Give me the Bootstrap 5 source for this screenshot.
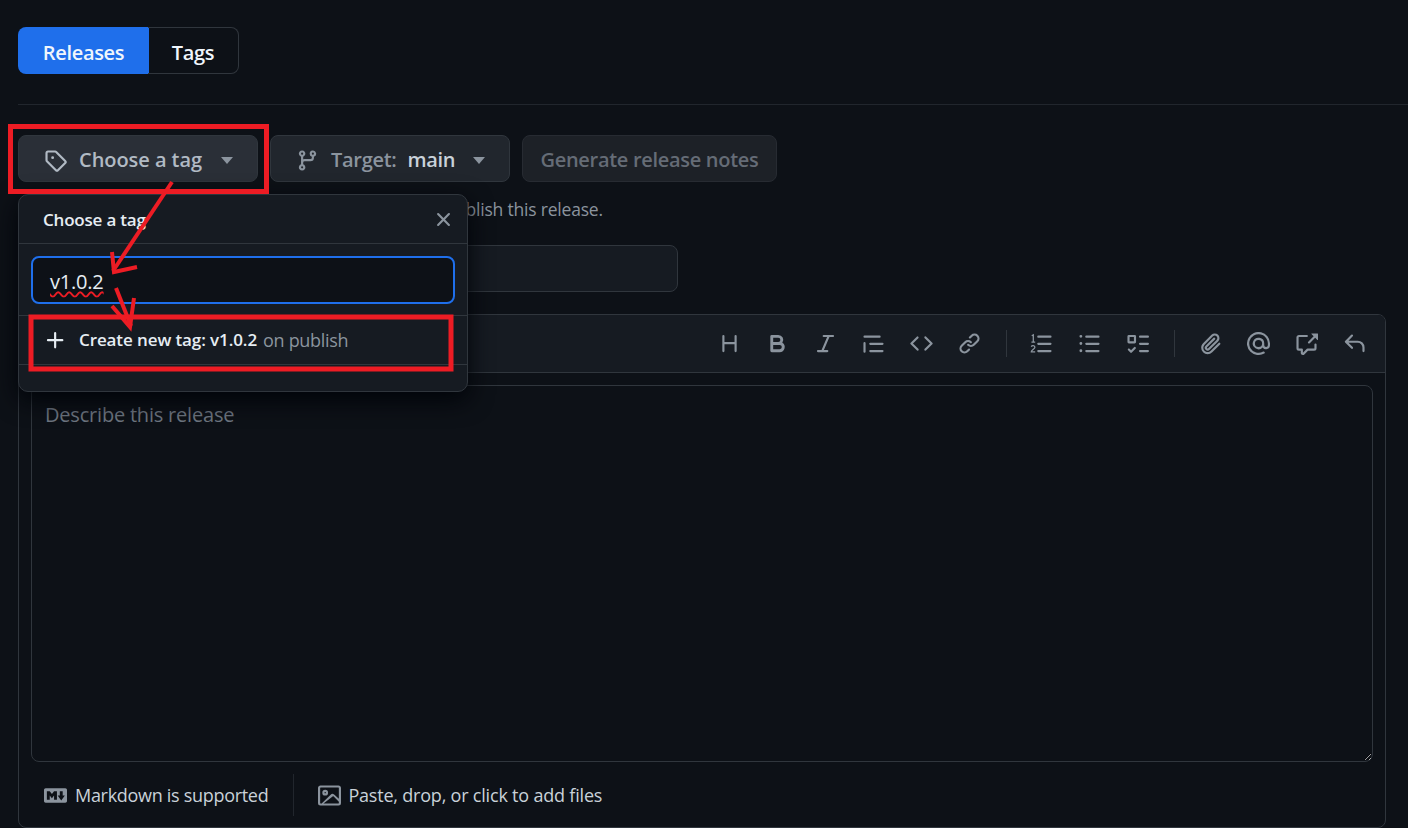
<!DOCTYPE html>
<html lang="en" data-bs-theme="dark">
<head>
<meta charset="utf-8">
<title>Releases</title>
<link href="https://cdn.jsdelivr.net/npm/bootstrap@5.3.0/dist/css/bootstrap.min.css" rel="stylesheet">
<style>
html,body{height:828px;overflow:hidden;margin:0}
body{background:#0d1117;color:#c9d1d9;font-family:"Open Sans","Noto Sans",sans-serif;font-size:19px;letter-spacing:-.2px;position:relative}
svg{fill:currentColor;flex:none;display:block}
.pg{padding:27px 22px 0 18px}
.tabs{width:221px;height:47px;margin-bottom:30px}
.tabs .btn{font-size:20px;font-weight:600;line-height:1;padding:4px 0 0;height:47px;display:flex;align-items:center;justify-content:center;color:#f0f6fc;letter-spacing:-.3px}
.tab-on{width:131px;flex:none!important;background:#1f6feb!important;border:0!important;border-radius:8px 0 0 8px!important}
.tab-off{flex:1 1 auto!important;background:transparent!important;border:1px solid #30363d!important;border-left:0!important;border-radius:0 8px 8px 0!important}
.rule{height:1px;background:#21262d;margin:0 -22px 30px 0}
.pick{height:47px;background:#21262d;border:1px solid #30363d;border-radius:8px;color:#8b949e;font-size:20px;font-weight:600;display:flex;align-items:center;padding:0;letter-spacing:-.3px}
.pick svg{margin-top:4px}
.pick span.lbl{padding-top:3px}
.pick b{padding-top:3px}
.pick-tag{width:240px;padding-left:25px;background:#2a2f37;color:#b1bac4}
.pick-tag .lbl{letter-spacing:-.05px}
.pick-tag .caret{margin-left:19px}
.pick-branch{width:240px;padding-left:25px;margin-left:12px}
.pick-gen{width:255px;justify-content:center;margin-left:12px;padding-top:2px;color:#656c76;background:#1d2127;border-color:#272b32}
.pick b{color:#c9d1d9;font-weight:600;margin-left:11px}
.caret{width:0;height:0;border:6px solid transparent;border-top:7px solid #8b949e;border-bottom:0;margin:4px 0 0 18px}
.hint{color:#8b949e;font-size:17.5px;line-height:24px;margin:15px 0 24px}
.title-field{width:660px;height:47px;background:#161b22;border:1px solid #30363d;border-radius:8px;margin-bottom:22px}
.editor{height:514px;border:1px solid #30363d;border-radius:8px;background:#0d1117;overflow:hidden}
.bar{height:58px;background:#161b22;border-bottom:1px solid #30363d;padding-right:7px;color:#8b949e}
.tool{width:48px;height:48px}
.sep{width:1px;height:27px;background:#30363d;margin:0 10px 0 13px}
.sep-b{margin-right:11px}
.digits{fill:none;stroke:currentColor;stroke-width:.9}
.body-wrap{padding:12px 12px 0}
.area{height:377px;background:#0d1117!important;border:1px solid #30363d;border-radius:8px;padding:14px 13px;color:#c9d1d9;font-size:20px;line-height:30px;letter-spacing:-.2px;box-shadow:none!important}
.area::placeholder{color:#6e7681;opacity:1}
.foot{height:66px;font-size:18px;color:#c9d1d9;padding-left:25px;letter-spacing:-.3px}
.foot svg{color:#8b949e}
.foot-sep{width:1px;height:42px;background:#21262d;margin:0 24px 0 25px}
.foot-files{margin-left:7px;letter-spacing:-.2px}
.pop{position:absolute;left:18px;top:194px;width:450px;height:198px;background:#161b22;border:1px solid #30363d;border-radius:10px;box-shadow:0 8px 24px #010409;z-index:2}
.pop-head{height:49px;padding:2px 12px 0 24px;border-bottom:1px solid #30363d;font-size:17px;font-weight:600;color:#e6edf3;letter-spacing:-.2px}
.pop-close{color:#8b949e;background:none;border:0;padding:0 0 2px;line-height:0}
.pop-filter{height:72px;padding:12px 12px 11px;border-bottom:1px solid #30363d}
.pop-input{height:48px;border:2px solid #1f6feb;border-radius:8px;background:#0d1117!important;color:#e6edf3;font-size:20px;padding:3px 0 0 17px;display:flex;align-items:center;box-shadow:none!important}
.wavy{text-decoration:underline wavy #ed1c24 1.5px;text-underline-offset:2px}
.pop-row{height:49px;padding-left:25px;border-bottom:1px solid #30363d;font-size:17px;color:#e6edf3;letter-spacing:-.1px}
.pop-row svg{margin-right:12px}
.pop-row b{font-weight:600}
.pop-row small{color:#8b949e;font-size:18px;margin-left:6px;letter-spacing:-.3px}
.marks{position:absolute;left:0;top:0;z-index:3;pointer-events:none;fill:none}
.marks *{stroke:#ed1c24;fill:none}
</style>
</head>
<body>
<main class="pg">
  <div class="btn-group d-flex tabs" role="group">
    <button class="btn tab-on" type="button">Releases</button>
    <button class="btn tab-off" type="button">Tags</button>
  </div>
  <div class="rule"></div>
  <div class="d-flex">
    <button class="pick pick-tag" type="button">
      <svg width="23" height="23" viewBox="0 0 16 16"><path d="M1 7.775V2.75C1 1.784 1.784 1 2.75 1h5.025c.464 0 .91.184 1.238.513l6.25 6.25a1.75 1.75 0 0 1 0 2.474l-5.026 5.026a1.75 1.75 0 0 1-2.474 0l-6.25-6.25A1.752 1.752 0 0 1 1 7.775Zm1.5 0c0 .066.026.13.073.177l6.25 6.25a.25.25 0 0 0 .354 0l5.025-5.025a.25.25 0 0 0 0-.354l-6.25-6.25a.25.25 0 0 0-.177-.073H2.75a.25.25 0 0 0-.25.25ZM6 5a1 1 0 1 1 0 2 1 1 0 0 1 0-2Z"/></svg>
      <span class="lbl ms-2 ps-1">Choose a tag</span><span class="caret"></span>
    </button>
    <button class="pick pick-branch" type="button">
      <svg width="23" height="23" viewBox="0 0 16 16"><path d="M9.5 3.25a2.25 2.25 0 1 1 3 2.122V6A2.5 2.5 0 0 1 10 8.5H6a1 1 0 0 0-1 1v1.128a2.251 2.251 0 1 1-1.5 0V5.372a2.25 2.25 0 1 1 1.5 0v1.836A2.493 2.493 0 0 1 6 7h4a1 1 0 0 0 1-1v-.628A2.25 2.25 0 0 1 9.5 3.25Zm-6 0a.75.75 0 1 0 1.5 0 .75.75 0 0 0-1.5 0Zm8.25-.75a.75.75 0 1 0 0 1.5.75.75 0 0 0 0-1.5ZM4.25 12a.75.75 0 1 0 0 1.5.75.75 0 0 0 0-1.5Z"/></svg>
      <span class="lbl ms-2 ps-1">Target:</span><b>main</b><span class="caret"></span>
    </button>
    <button class="pick pick-gen" type="button">Generate release notes</button>
  </div>
  <p class="hint">Choose an existing tag, or create a new tag when you publish this release.</p>
  <div class="title-field"></div>
  <section class="editor">
    <div class="bar d-flex align-items-center justify-content-end">
      <span class="tool d-flex align-items-center justify-content-center"><svg width="23" height="23" viewBox="0 0 16 16"><path d="M3.75 2a.75.75 0 0 1 .75.75V7h7V2.75a.75.75 0 0 1 1.5 0v10.5a.75.75 0 0 1-1.5 0V8.5h-7v4.75a.75.75 0 0 1-1.5 0V2.75A.75.75 0 0 1 3.75 2Z"/></svg></span>
      <span class="tool d-flex align-items-center justify-content-center"><svg width="23" height="23" viewBox="0 0 16 16"><path d="M4 2h4.5a3.501 3.501 0 0 1 2.852 5.53A3.499 3.499 0 0 1 9.5 14H4a1 1 0 0 1-1-1V3a1 1 0 0 1 1-1Zm1 7v3h4.5a1.5 1.5 0 0 0 0-3Zm3.5-2a1.5 1.5 0 0 0 0-3H5v3Z"/></svg></span>
      <span class="tool d-flex align-items-center justify-content-center"><svg width="23" height="23" viewBox="0 0 16 16"><path d="M6 2.75A.75.75 0 0 1 6.75 2h6.5a.75.75 0 0 1 0 1.5h-2.505l-3.858 9H9.25a.75.75 0 0 1 0 1.5h-6.5a.75.75 0 0 1 0-1.5h2.505l3.858-9H6.75A.75.75 0 0 1 6 2.75Z"/></svg></span>
      <span class="tool d-flex align-items-center justify-content-center"><svg width="23" height="23" viewBox="0 0 16 16"><path d="M1.75 2.5h10.5a.75.75 0 0 1 0 1.5H1.75a.75.75 0 0 1 0-1.5Zm4 5h8.5a.75.75 0 0 1 0 1.5h-8.5a.75.75 0 0 1 0-1.5Zm0 5h8.5a.75.75 0 0 1 0 1.5h-8.5a.75.75 0 0 1 0-1.5ZM2.5 7.75v6a.75.75 0 0 1-1.5 0v-6a.75.75 0 0 1 1.5 0Z"/></svg></span>
      <span class="tool d-flex align-items-center justify-content-center"><svg width="23" height="23" viewBox="0 0 16 16"><path d="m11.28 3.22 4.25 4.25a.75.75 0 0 1 0 1.06l-4.25 4.25a.749.749 0 0 1-1.275-.326.749.749 0 0 1 .215-.734L13.94 8l-3.72-3.72a.749.749 0 0 1 .326-1.275.749.749 0 0 1 .734.215Zm-6.56 0a.751.751 0 0 1 1.042.018.751.751 0 0 1 .018 1.042L2.06 8l3.72 3.72a.749.749 0 0 1-.326 1.275.749.749 0 0 1-.734-.215L.47 8.53a.75.75 0 0 1 0-1.06Z"/></svg></span>
      <span class="tool d-flex align-items-center justify-content-center"><svg width="23" height="23" viewBox="0 0 16 16"><path d="m7.775 3.275 1.25-1.25a3.5 3.5 0 1 1 4.95 4.95l-2.5 2.5a3.5 3.5 0 0 1-4.95 0 .751.751 0 0 1 .018-1.042.751.751 0 0 1 1.042-.018 1.998 1.998 0 0 0 2.83 0l2.5-2.5a2.002 2.002 0 0 0-2.83-2.83l-1.25 1.25a.751.751 0 0 1-1.042-.018.751.751 0 0 1-.018-1.042Zm-4.69 9.64a1.998 1.998 0 0 0 2.83 0l1.25-1.25a.751.751 0 0 1 1.042.018.751.751 0 0 1 .018 1.042l-1.25 1.25a3.5 3.5 0 1 1-4.95-4.95l2.5-2.5a3.5 3.5 0 0 1 4.95 0 .751.751 0 0 1-.018 1.042.751.751 0 0 1-1.042.018 1.998 1.998 0 0 0-2.83 0l-2.5 2.5a1.998 1.998 0 0 0 0 2.83Z"/></svg></span>
      <span class="sep"></span>
      <span class="tool d-flex align-items-center justify-content-center"><svg width="23" height="23" viewBox="0 0 16 16"><path d="M5.75 2.5h8.5a.75.75 0 0 1 0 1.5h-8.5a.75.75 0 0 1 0-1.5Zm0 5h8.5a.75.75 0 0 1 0 1.5h-8.5a.75.75 0 0 1 0-1.5Zm0 5h8.5a.75.75 0 0 1 0 1.5h-8.5a.75.75 0 0 1 0-1.5Z"/><path class="digits" d="M1.2 2.6l1.1-.6v5M1 7h2.6M.9 10.2c.4-1 2.5-1 2.5.4 0 1.2-2.5 2-2.5 3.2h2.7"/></svg></span>
      <span class="tool d-flex align-items-center justify-content-center"><svg width="23" height="23" viewBox="0 0 16 16"><path d="M5.75 2.5h8.5a.75.75 0 0 1 0 1.5h-8.5a.75.75 0 0 1 0-1.5Zm0 5h8.5a.75.75 0 0 1 0 1.5h-8.5a.75.75 0 0 1 0-1.5Zm0 5h8.5a.75.75 0 0 1 0 1.5h-8.5a.75.75 0 0 1 0-1.5ZM2 14a1 1 0 1 1 0-2 1 1 0 0 1 0 2Zm1-6a1 1 0 1 1-2 0 1 1 0 0 1 2 0ZM2 4a1 1 0 1 1 0-2 1 1 0 0 1 0 2Z"/></svg></span>
      <span class="tool d-flex align-items-center justify-content-center"><svg width="23" height="23" viewBox="0 0 16 16"><path d="M2 2h4a1 1 0 0 1 1 1v4a1 1 0 0 1-1 1H2a1 1 0 0 1-1-1V3a1 1 0 0 1 1-1Zm4.655 8.595a.75.75 0 0 1 0 1.06L4.03 14.28a.75.75 0 0 1-1.06 0l-1.5-1.5a.749.749 0 0 1 .326-1.275.749.749 0 0 1 .734.215l.97.97 2.095-2.095a.75.75 0 0 1 1.06 0ZM9.75 2.5h5.5a.75.75 0 0 1 0 1.5h-5.5a.75.75 0 0 1 0-1.5Zm0 5h5.5a.75.75 0 0 1 0 1.5h-5.5a.75.75 0 0 1 0-1.5Zm0 5h5.5a.75.75 0 0 1 0 1.5h-5.5a.75.75 0 0 1 0-1.5Zm-7.25-9v3h3v-3Z"/></svg></span>
      <span class="sep sep-b"></span>
      <span class="tool d-flex align-items-center justify-content-center"><svg width="23" height="23" viewBox="0 0 16 16"><path d="M12.212 3.02a1.753 1.753 0 0 0-2.478.003l-5.83 5.83a3.007 3.007 0 0 0-.88 2.127c0 .795.315 1.551.88 2.116.567.567 1.333.89 2.126.89.79 0 1.548-.321 2.116-.89l5.48-5.48a.75.75 0 0 1 1.061 1.06l-5.48 5.48a4.492 4.492 0 0 1-3.177 1.33c-1.2 0-2.345-.487-3.187-1.33a4.483 4.483 0 0 1-1.32-3.176c0-1.195.475-2.341 1.32-3.186l5.83-5.83a3.25 3.25 0 0 1 5.553 2.297c0 .863-.343 1.691-.953 2.301L7.439 12.39c-.375.377-.884.59-1.416.593a1.998 1.998 0 0 1-1.412-.593 1.992 1.992 0 0 1 0-2.828l5.48-5.48a.751.751 0 0 1 1.042.018.751.751 0 0 1 .018 1.042l-5.48 5.48a.492.492 0 0 0 0 .707.499.499 0 0 0 .352.154.51.51 0 0 0 .356-.154l5.833-5.827a1.755 1.755 0 0 0 0-2.481Z"/></svg></span>
      <span class="tool d-flex align-items-center justify-content-center"><svg width="23" height="23" viewBox="0 0 16 16"><path d="M4.75 2.37a6.501 6.501 0 0 0 6.5 11.26.75.75 0 0 1 .75 1.298A7.999 7.999 0 0 1 .989 4.148 8 8 0 0 1 16 7.75v1.5a2.75 2.75 0 0 1-5.072 1.475 3.999 3.999 0 0 1-6.65-4.19A4 4 0 0 1 12 8v1.25a1.25 1.25 0 0 0 2.5 0V7.867a6.5 6.5 0 0 0-9.75-5.496ZM10.5 8a2.5 2.5 0 1 0-5 0 2.5 2.5 0 0 0 5 0Z"/></svg></span>
      <span class="tool d-flex align-items-center justify-content-center"><svg width="23" height="23" viewBox="0 0 16 16"><path d="M2.75 3.5a.25.25 0 0 0-.25.25v7.5c0 .138.112.25.25.25h2a.75.75 0 0 1 .75.75v2.19l2.72-2.72a.749.749 0 0 1 .53-.22h4.5a.25.25 0 0 0 .25-.25v-2.5a.75.75 0 0 1 1.5 0v2.5A1.75 1.75 0 0 1 13.25 13H9.06l-2.573 2.573A1.458 1.458 0 0 1 4 14.543V13H2.75A1.75 1.75 0 0 1 1 11.25v-7.5C1 2.784 1.784 2 2.75 2h5.5a.75.75 0 0 1 0 1.5ZM16 1.25v4.146a.25.25 0 0 1-.427.177L14.03 4.03l-3.75 3.75a.749.749 0 0 1-1.275-.326.749.749 0 0 1 .215-.734l3.75-3.75-1.543-1.543A.25.25 0 0 1 11.604 1h4.146a.25.25 0 0 1 .25.25Z"/></svg></span>
      <span class="tool d-flex align-items-center justify-content-center"><svg width="23" height="23" viewBox="0 0 16 16"><path d="M6.78 1.97a.75.75 0 0 1 0 1.06L3.81 6h6.44A4.75 4.75 0 0 1 15 10.75v2.5a.75.75 0 0 1-1.5 0v-2.5a3.25 3.25 0 0 0-3.25-3.25H3.81l2.97 2.97a.749.749 0 0 1-.326 1.275.749.749 0 0 1-.734-.215L1.47 7.28a.75.75 0 0 1 0-1.06l4.25-4.25a.75.75 0 0 1 1.06 0Z"/></svg></span>
    </div>
    <div class="body-wrap">
      <textarea class="form-control area" placeholder="Describe this release" aria-label="Describe this release"></textarea>
    </div>
    <div class="foot d-flex align-items-center">
      <svg width="23" height="23" viewBox="0 0 16 16"><path d="M14.85 3c.63 0 1.15.52 1.14 1.15v7.7c0 .63-.51 1.15-1.15 1.15H1.15C.52 13 0 12.48 0 11.84V4.15C0 3.52.52 3 1.15 3ZM9 11V5H7L5.5 7 4 5H2v6h2V8l1.5 1.92L7 8v3Zm2.99.5L14.5 8H13V5h-2v3H9.5Z"/></svg>
      <span class="ms-2">Markdown is supported</span>
      <span class="foot-sep"></span>
      <svg width="23" height="23" viewBox="0 0 16 16"><path d="M16 13.25A1.75 1.75 0 0 1 14.25 15H1.75A1.75 1.75 0 0 1 0 13.25V2.75C0 1.784.784 1 1.75 1h12.5c.966 0 1.75.784 1.75 1.75ZM1.75 2.5a.25.25 0 0 0-.25.25v10.5c0 .138.112.25.25.25h.94l.03-.03 6.077-6.078a1.75 1.75 0 0 1 2.412-.06L14.5 10.31V2.75a.25.25 0 0 0-.25-.25Zm12.5 11a.25.25 0 0 0 .25-.25v-.922l-3.75-3.75a.25.25 0 0 0-.354 0L3.81 13.5ZM7 6a2 2 0 1 1-3.999.001A2 2 0 0 1 7 6ZM5.5 6a.5.5 0 1 0-1 0 .5.5 0 0 0 1 0Z"/></svg>
      <span class="foot-files">Paste, drop, or click to add files</span>
    </div>
  </section>
</main>

<aside class="pop">
  <div class="pop-head d-flex align-items-center justify-content-between">
    <span>Choose a tag</span>
    <button class="pop-close" type="button" aria-label="Close"><svg width="23" height="23" viewBox="0 0 16 16"><path d="M3.72 3.72a.75.75 0 0 1 1.06 0L8 6.94l3.22-3.22a.749.749 0 0 1 1.275.326.749.749 0 0 1-.215.734L9.06 8l3.22 3.22a.749.749 0 0 1-.326 1.275.749.749 0 0 1-.734-.215L8 9.06l-3.22 3.22a.751.751 0 0 1-1.042-.018.751.751 0 0 1-.018-1.042L6.94 8 3.72 4.78a.75.75 0 0 1 0-1.06Z"/></svg></button>
  </div>
  <div class="pop-filter"><div class="form-control pop-input"><span class="wavy">v1.0.2</span></div></div>
  <div class="pop-row d-flex align-items-center">
    <svg width="23" height="23" viewBox="0 0 16 16"><path d="M7.75 2a.75.75 0 0 1 .75.75V7h4.25a.75.75 0 0 1 0 1.5H8.5v4.25a.75.75 0 0 1-1.5 0V8.5H2.75a.75.75 0 0 1 0-1.5H7V2.75A.75.75 0 0 1 7.75 2Z"/></svg>
    <b>Create new tag: v1.0.2</b><small>on publish</small>
  </div>
</aside>

<svg class="marks" width="1408" height="828" viewBox="0 0 1408 828" aria-hidden="true">
  <rect x="10.5" y="126.5" width="256" height="65" stroke-width="5"/>
  <rect x="31" y="317" width="420" height="52" stroke-width="5"/>
  <path d="M172 182 113 271" stroke-width="4"/>
  <path d="M112 252l2 20 23-5" stroke-width="4"/>
  <path d="M116 288l15 38" stroke-width="4"/>
  <path d="M112 306l18 21 4-29" stroke-width="4"/>
</svg>
</body>
</html>
